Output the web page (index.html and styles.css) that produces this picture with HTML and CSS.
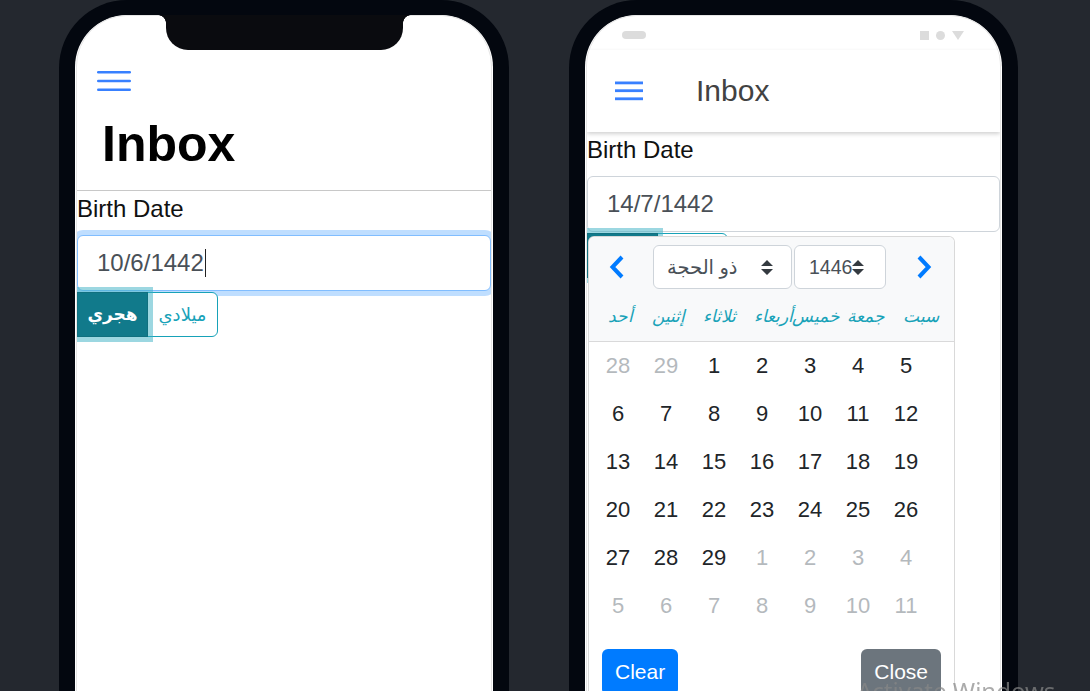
FILE: index.html
```html
<!DOCTYPE html>
<html lang="en">
<head>
    <meta charset="UTF-8">
    <meta name="viewport" content="width=device-width, initial-scale=1.0">
    <title>Hijri Date Picker</title>
    <link rel="stylesheet" href="styles.css">
</head>
<body>
    <div class="stage">
        <!-- iOS preview -->
        <div class="phone ios">
            <div class="screen">
                <div class="app">
                    <header class="ios-header">
                        <div class="ios-toolbar">
                            <button class="menu-btn ios-menu">
                                <svg width="34" height="22" viewBox="0 0 34 22">
                                    <rect x="0" y="1" width="34" height="2.6" rx="1.3" fill="#3880ff"/>
                                    <rect x="0" y="9.7" width="34" height="2.6" rx="1.3" fill="#3880ff"/>
                                    <rect x="0" y="18.4" width="34" height="2.6" rx="1.3" fill="#3880ff"/>
                                </svg>
                            </button>
                        </div>
                        <h1 class="large-title">Inbox</h1>
                    </header>
                    <div class="content">
                        <label class="field-label">Birth Date</label>
                        <div class="date-input focused">10/6/1442<span class="caret"></span></div>
                        <div class="btn-group">
                            <button class="cal-btn active">هجري</button>
                            <button class="cal-btn">ميلادي</button>
                        </div>
                    </div>
                </div>
                <div class="notch"></div>
            </div>
        </div>

        <!-- Android preview -->
        <div class="phone md">
            <div class="screen">
                <div class="app">
                    <div class="status-bar">
                        <span class="pill"></span>
                        <div class="status-icons">
                            <span class="st-square"></span>
                            <span class="st-dot"></span>
                            <svg width="12" height="9" viewBox="0 0 12 9"><path d="M0 0h12L6 9z" fill="#dcdcdc"/></svg>
                        </div>
                    </div>
                    <div class="md-toolbar">
                        <button class="menu-btn md-menu">
                            <svg width="28" height="20" viewBox="0 0 28 20">
                                <rect x="0" y="0.5" width="28" height="2.8" fill="#3880ff"/>
                                <rect x="0" y="8.3" width="28" height="2.8" fill="#3880ff"/>
                                <rect x="0" y="16.4" width="28" height="2.8" fill="#3880ff"/>
                            </svg>
                        </button>
                        <div class="md-title">Inbox</div>
                    </div>
                    <div class="content">
                        <label class="field-label">Birth Date</label>
                        <div class="date-field">
                            <div class="date-input">14/7/1442</div>
                            <div class="btn-group">
                                <button class="cal-btn active">هجري</button>
                                <button class="cal-btn">ميلادي</button>
                            </div>

                            <div class="dp">
                                <div class="dp-header">
                                    <div class="dp-nav">
                                        <button class="dp-arrow prev">
                                            <svg width="16" height="24" viewBox="0 0 16 24"><polyline points="13,2 3.5,12 13,22" fill="none" stroke="#007bff" stroke-width="4"/></svg>
                                        </button>
                                        <div class="dp-select month">
                                            <span>ذو الحجة</span>
                                            <svg width="12" height="15" viewBox="0 0 4 5"><path d="M2 0L0 2h4zm0 5L0 3h4z" fill="#343a40"/></svg>
                                        </div>
                                        <div class="dp-select year">
                                            <span>1446</span>
                                            <svg width="12" height="15" viewBox="0 0 4 5"><path d="M2 0L0 2h4zm0 5L0 3h4z" fill="#343a40"/></svg>
                                        </div>
                                        <button class="dp-arrow next">
                                            <svg width="16" height="24" viewBox="0 0 16 24"><polyline points="3,2 12.5,12 3,22" fill="none" stroke="#007bff" stroke-width="4"/></svg>
                                        </button>
                                    </div>
                                    <div class="dp-weekdays">
                                        <span>أحد</span>
                                        <span>إثنين</span>
                                        <span>ثلاثاء</span>
                                        <span>أربعاء</span>
                                        <span>خميس</span>
                                        <span>جمعة</span>
                                        <span>سبت</span>
                                    </div>
                                </div>
                                <div class="dp-days">
                                    <span class="muted">28</span><span class="muted">29</span><span>1</span><span>2</span><span>3</span><span>4</span><span>5</span>
                                    <span>6</span><span>7</span><span>8</span><span>9</span><span>10</span><span>11</span><span>12</span>
                                    <span>13</span><span>14</span><span>15</span><span>16</span><span>17</span><span>18</span><span>19</span>
                                    <span>20</span><span>21</span><span>22</span><span>23</span><span>24</span><span>25</span><span>26</span>
                                    <span>27</span><span>28</span><span>29</span><span class="muted">1</span><span class="muted">2</span><span class="muted">3</span><span class="muted">4</span>
                                    <span class="muted">5</span><span class="muted">6</span><span class="muted">7</span><span class="muted">8</span><span class="muted">9</span><span class="muted">10</span><span class="muted">11</span>
                                </div>
                                <div class="dp-footer">
                                    <button class="dp-btn clear">Clear</button>
                                    <button class="dp-btn close">Close</button>
                                </div>
                            </div>
                        </div>
                    </div>
                </div>
            </div>
        </div>
    </div>

    <div class="watermark">Activate Windows</div>
</body>
</html>
```

FILE: styles.css
```css
:root {
    --page-bg: #24282f;
    --frame: #03070f;
    --ion-primary: #3880ff;
    --info: #17a2b8;
    --info-dark: #117a8b;
    --input-border: #ced4da;
    --input-text: #495057;
}

* {
    margin: 0;
    padding: 0;
    box-sizing: border-box;
}

body {
    background-color: var(--page-bg);
    font-family: 'Liberation Sans', 'DejaVu Sans', Arial, sans-serif;
    color: #212529;
    height: 691px;
    overflow: hidden;
}

button {
    font-family: inherit;
    border: none;
    background: none;
    cursor: pointer;
}

.stage {
    display: flex;
    gap: 60px;
    padding-left: 59px;
}

/* phone frames */
.phone {
    flex-shrink: 0;
    width: 450px;
    height: 790px;
    background: var(--frame);
    border-radius: 68px;
    padding: 15px 16px;
}

.phone.md {
    width: 449px;
}

.screen {
    position: relative;
    height: 100%;
    background: white;
    border-radius: 52px;
    padding: 0 1px;
    overflow: hidden;
}

.app {
    position: relative;
    height: 100%;
    border: 1px solid #e6e6e6;
    border-radius: 51px;
    overflow: hidden;
}

.notch {
    position: absolute;
    top: 0;
    left: 91px;
    width: 237px;
    height: 35px;
    background: #0a0b0f;
    border-radius: 0 0 22px 22px;
}

.notch::before,
.notch::after {
    content: '';
    position: absolute;
    top: 0;
    width: 8px;
    height: 8px;
}

.notch::before {
    left: -8px;
    background: radial-gradient(circle at 0 100%, transparent 7.5px, #0a0b0f 8px);
}

.notch::after {
    right: -8px;
    background: radial-gradient(circle at 100% 100%, transparent 7.5px, #0a0b0f 8px);
}

.menu-btn {
    display: flex;
    align-items: center;
}

/* iOS header */
.ios-header {
    padding-top: 32px;
}

.ios-toolbar {
    height: 66px;
    display: flex;
    align-items: center;
    padding-left: 20px;
}

.large-title {
    font-size: 50px;
    font-weight: 700;
    line-height: 60px;
    color: #000;
    padding: 0 0 16px 25px;
    border-bottom: 1px solid #c8c8c8;
}

/* Android header */
.status-bar {
    height: 34px;
    display: flex;
    align-items: center;
    justify-content: space-between;
    padding: 4px 36px 0 35px;
}

.pill {
    width: 24px;
    height: 8px;
    border-radius: 4px;
    background: #dcdcdc;
}

.status-icons {
    display: flex;
    align-items: center;
    gap: 7px;
}

.st-square {
    width: 9px;
    height: 9px;
    background: #dcdcdc;
}

.st-dot {
    width: 9px;
    height: 9px;
    border-radius: 50%;
    background: #dcdcdc;
}

.md-toolbar {
    position: relative;
    z-index: 2;
    height: 82px;
    display: flex;
    align-items: center;
    padding-left: 28px;
    box-shadow: 0 2px 4px rgba(0, 0, 0, 0.18);
    background: white;
}

.md-title {
    margin-left: 53px;
    font-size: 30px;
    color: #424242;
}

/* form */
.field-label {
    display: block;
    font-size: 24px;
    line-height: 36px;
    color: #111;
    margin-bottom: 8px;
}

.date-input {
    display: flex;
    align-items: center;
    height: 56px;
    padding: 0 19px;
    border: 1px solid var(--input-border);
    border-radius: 6px;
    font-size: 24px;
    color: var(--input-text);
    background: white;
}

.date-input.focused {
    border-color: #80bdff;
    box-shadow: 0 0 0 5px rgba(0, 123, 255, 0.25);
}

.caret {
    width: 1px;
    height: 28px;
    margin-left: 1px;
    background: #222;
}

.btn-group {
    display: flex;
    margin-top: 1px;
}

.cal-btn {
    height: 45px;
    width: 71px;
    font-size: 18px;
    color: var(--info);
    border: 1px solid var(--info);
    background: white;
    border-radius: 0 6px 6px 0;
    margin-left: -1px;
}

.cal-btn.active {
    position: relative;
    z-index: 1;
    width: 71px;
    margin-left: 0;
    color: white;
    font-weight: 700;
    font-size: 17px;
    background: var(--info-dark);
    border-color: #10707f;
    border-radius: 0;
    box-shadow: 0 0 0 5px rgba(58, 176, 195, 0.5);
}

/* datepicker dropdown */
.date-field {
    position: relative;
}

.dp {
    position: absolute;
    top: 60px;
    left: 1px;
    z-index: 5;
    width: 367px;
    background: white;
    border: 1px solid rgba(0, 0, 0, 0.15);
    border-radius: 6px;
}

.dp-header {
    background: #f8f9fa;
    padding-top: 8px;
    border-radius: 6px 6px 0 0;
}

.dp-nav {
    display: flex;
    align-items: center;
    height: 44px;
}

.dp-arrow {
    display: flex;
    align-items: center;
    justify-content: center;
    height: 44px;
}

.dp-arrow.prev {
    width: 64px;
    padding-right: 9px;
}

.dp-arrow.next {
    flex: 1;
    padding-left: 8px;
}

.dp-select {
    display: flex;
    align-items: center;
    justify-content: space-between;
    height: 44px;
    border: 1px solid var(--input-border);
    border-radius: 6px;
    background: white;
    font-size: 19.5px;
    color: var(--input-text);
}

.dp-select svg {
    flex-shrink: 0;
}

.dp-select.month {
    width: 139px;
    padding: 0 18px 0 13px;
}

.dp-select.year {
    width: 92px;
    margin-left: 2px;
    padding: 0 22px 0 14px;
}

.dp-weekdays {
    display: grid;
    grid-template-columns: 46px 50px 52px 56px 30px 70px 40px;
    height: 53px;
    align-items: center;
    padding: 2px 0 0 8px;
    border-bottom: 1px solid rgba(0, 0, 0, 0.125);
}

.dp-weekdays span {
    display: flex;
    justify-content: center;
    white-space: nowrap;
    font-style: italic;
    font-size: 17px;
    color: var(--info);
}

.dp-days {
    display: grid;
    grid-template-columns: repeat(7, 48px);
    grid-auto-rows: 48px;
    padding-left: 5px;
    font-size: 22px;
}

.dp-days span {
    display: flex;
    align-items: center;
    justify-content: center;
}

.dp-days .muted {
    color: #6c757d;
    opacity: 0.5;
}

.dp-footer {
    display: flex;
    justify-content: space-between;
    padding: 19px 13px;
}

.dp-btn {
    height: 46px;
    padding: 0 13px;
    border-radius: 6px;
    color: white;
    font-size: 21px;
}

.dp-btn.clear {
    background: #007bff;
}

.dp-btn.close {
    background: #6c757d;
}

.watermark {
    position: fixed;
    z-index: 100;
    left: 857px;
    top: 674px;
    font-family: 'Noto Sans', sans-serif;
    font-size: 24px;
    color: rgba(135, 135, 135, 0.7);
    white-space: nowrap;
    pointer-events: none;
}
```
